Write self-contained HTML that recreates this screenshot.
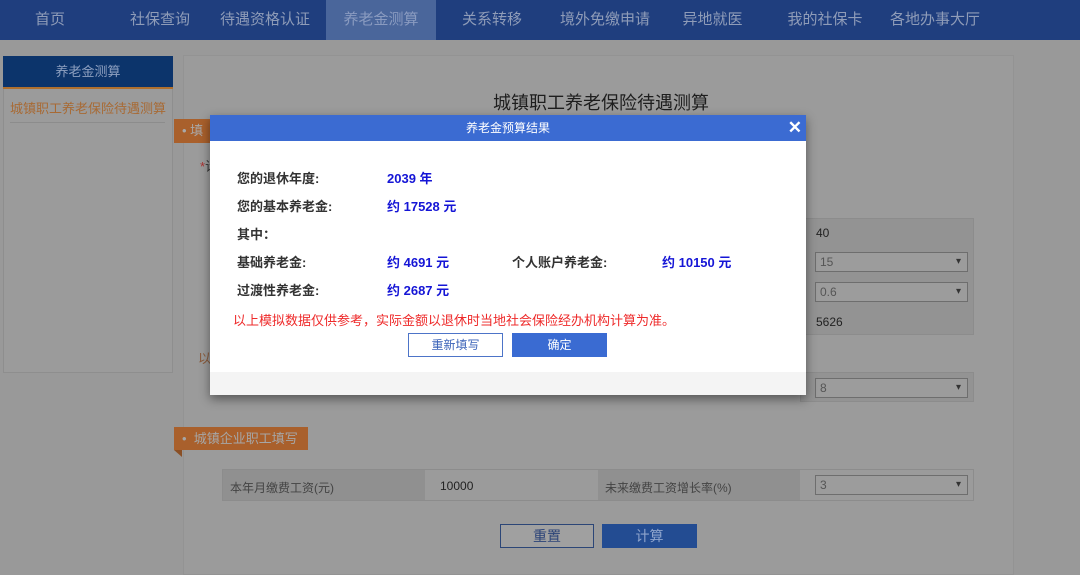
<!DOCTYPE html>
<html><head><meta charset="utf-8"><style>
*{margin:0;padding:0;box-sizing:border-box}
body{width:1080px;height:567px;overflow:hidden;background:#999;font-family:"Liberation Sans","Noto Sans CJK SC",sans-serif;position:relative}
.a{position:absolute}
.nav{left:0;top:0;width:1080px;height:40px;background:#1f3e7e}
.nav span{position:absolute;top:0;line-height:40px;color:#8f9cb8;font-size:15px;text-align:center}
.cell{position:absolute;background:#939393;border:1px solid #8c8c8c}
.sel{position:absolute;border:1px solid #6e6e6e;background:#9c9c9c;font-size:12px;color:#555;padding-left:4px;line-height:18px;height:20px}
.sel:after{content:"▾";position:absolute;right:6px;top:0;font-size:10px;color:#333}
.m{font-size:13px;color:#333;font-weight:bold}
.v{font-size:13px;color:#1515d6;font-weight:bold}
</style></head><body>
<div class="a nav">
<span style="left:20px;width:60px">首页</span>
<span style="left:120px;width:80px">社保查询</span>
<span style="left:210px;width:110px">待遇资格认证</span>
<span style="left:326px;width:110px;background:#4a669b;color:#8a9bc0">养老金测算</span>
<span style="left:452px;width:80px">关系转移</span>
<span style="left:550px;width:110px">境外免缴申请</span>
<span style="left:675px;width:75px">异地就医</span>
<span style="left:780px;width:90px">我的社保卡</span>
<span style="left:880px;width:110px">各地办事大厅</span>
</div>
<div class="a" style="left:3px;top:56px;width:170px;height:317px;border:1px solid #8e8e8e;background:#9b9b9b"></div>
<div class="a" style="left:3px;top:56px;width:170px;height:33px;background:#0c346b;color:#8ea0c0;font-size:13px;text-align:center;line-height:32px;border-bottom:2px solid #b0702e">养老金测算</div>
<div class="a" style="left:10px;top:98px;font-size:13px;color:#a86a34">城镇职工养老保险待遇测算</div>
<div class="a" style="left:10px;top:122px;width:155px;height:1px;background:#8c8c8c"></div>
<div class="a" style="left:183px;top:55px;width:831px;height:520px;border:1px solid #939393;background:#9b9b9b"></div>
<div class="a" style="left:493px;top:89px;font-size:18px;color:#1e1e1e">城镇职工养老保险待遇测算</div>
<div class="a" style="left:174px;top:119px;width:40px;height:24px;background:#a9602c;color:#a9a9a9;font-size:13px;line-height:24px;padding-left:8px">• 填</div>
<div class="a" style="left:200px;top:156px;font-size:13px;color:#333"><span style="color:#a33">*</span>请</div>
<div class="a" style="left:198px;top:348px;font-size:13px;color:#8a5a3a">以</div>
<div class="cell" style="left:800px;top:218px;width:174px;height:117px"></div>
<div class="a" style="left:816px;top:226px;font-size:12px;color:#222">40</div>
<div class="sel" style="left:815px;top:252px;width:153px">15</div>
<div class="sel" style="left:815px;top:282px;width:153px">0.6</div>
<div class="a" style="left:816px;top:315px;font-size:12px;color:#222">5626</div>
<div class="cell" style="left:800px;top:372px;width:174px;height:30px"></div>
<div class="sel" style="left:815px;top:378px;width:153px">8</div>
<div class="a" style="left:174px;top:427px;width:134px;height:23px;background:#a9602c;color:#a6a6a6;font-size:13px;line-height:23px;padding-left:8px">•&nbsp; 城镇企业职工填写</div>
<div class="a" style="left:174px;top:450px;width:0;height:0;border-top:7px solid #8a4f25;border-left:8px solid transparent"></div>
<div class="cell" style="left:222px;top:469px;width:752px;height:32px;background:#9b9b9b"></div>
<div class="a" style="left:223px;top:470px;width:202px;height:30px;background:#909090"></div>
<div class="a" style="left:598px;top:470px;width:202px;height:30px;background:#909090"></div>
<div class="a" style="left:230px;top:479px;font-size:12px;color:#444">本年月缴费工资(元)</div>
<div class="a" style="left:440px;top:479px;font-size:12px;color:#222">10000</div>
<div class="a" style="left:605px;top:479px;font-size:12px;color:#444">未来缴费工资增长率(%)</div>
<div class="sel" style="left:815px;top:475px;width:153px">3</div>
<div class="a" style="left:500px;top:524px;width:94px;height:24px;border:1px solid #2c4677;background:#a0a0a0;color:#2b4378;font-size:14px;text-align:center;line-height:22px">重置</div>
<div class="a" style="left:602px;top:524px;width:95px;height:24px;background:#234c92;color:#8ea4cc;font-size:14px;text-align:center;line-height:24px">计算</div>

<div class="a" style="left:210px;top:115px;width:596px;height:280px;background:#fff;box-shadow:0 4px 10px rgba(0,0,0,.45)">
<div style="height:26px;background:#3b6bd2;color:#fff;font-size:12px;text-align:center;line-height:26px;position:relative">养老金预算结果<span style="position:absolute;right:4px;top:0;font-size:17px;font-weight:bold">✕</span></div>
<div class="a m" style="left:27px;top:53px">您的退休年度:</div><div class="a v" style="left:177px;top:53px">2039 年</div>
<div class="a m" style="left:27px;top:81px">您的基本养老金:</div><div class="a v" style="left:177px;top:81px">约 17528 元</div>
<div class="a m" style="left:27px;top:109px">其中：</div>
<div class="a m" style="left:27px;top:137px">基础养老金:</div><div class="a v" style="left:177px;top:137px">约 4691 元</div>
<div class="a m" style="left:302px;top:137px">个人账户养老金:</div><div class="a v" style="left:452px;top:137px">约 10150 元</div>
<div class="a m" style="left:27px;top:165px">过渡性养老金:</div><div class="a v" style="left:177px;top:165px">约 2687 元</div>
<div class="a" style="left:23px;top:195px;font-size:13px;color:#ee2a2a">以上模拟数据仅供参考，实际金额以退休时当地社会保险经办机构计算为准。</div>
<div class="a" style="left:198px;top:218px;width:95px;height:24px;border:1px solid #4d74c8;color:#3a62b8;font-size:12px;text-align:center;line-height:22px">重新填写</div>
<div class="a" style="left:302px;top:218px;width:95px;height:24px;background:#3a6bd2;color:#fff;font-size:12px;text-align:center;line-height:24px">确定</div>
<div class="a" style="left:0;top:257px;width:596px;height:23px;background:#f4f4f4"></div>
</div>
</body></html>
